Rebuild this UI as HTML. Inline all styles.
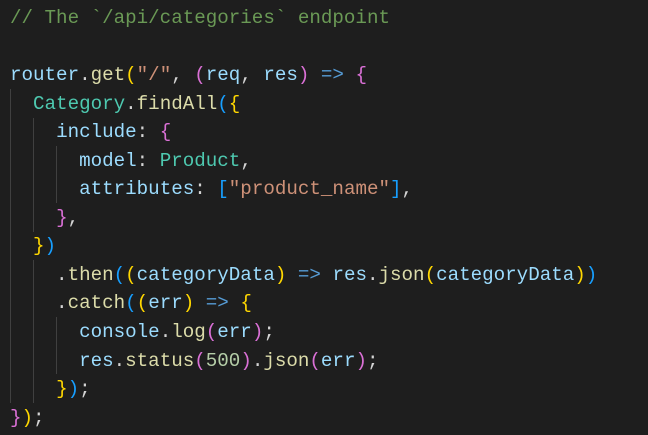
<!DOCTYPE html>
<html><head><style>
html,body{margin:0;padding:0;background:#1e1e1e;width:648px;height:435px;overflow:hidden}
pre{margin:0;position:absolute;left:10px;top:4px;font-family:"Liberation Mono",monospace;font-size:19.2px;line-height:28.55px;color:#d4d4d4}
.c{color:#6a9955}.v{color:#9cdcfe}.f{color:#dcdcaa}.t{color:#4ec9b0}.s{color:#ce9178}.n{color:#b5cea8}.k{color:#569cd6}
.y{color:#ffd700}.p{color:#da70d6}.b{color:#179fff}
.g{position:absolute;width:1px;background:#404040}
</style></head><body>
<div class="g" style="left:10px;top:89px;height:314px"></div>
<div class="g" style="left:33px;top:118px;height:114px"></div>
<div class="g" style="left:33px;top:260px;height:143px"></div>
<div class="g" style="left:56px;top:146px;height:57px"></div>
<div class="g" style="left:56px;top:317px;height:57px"></div>
<pre><span class="c">// The `/api/categories` endpoint</span>

<span class="v">router</span>.<span class="f">get</span><span class="y">(</span><span class="s">"/"</span>, <span class="p">(</span><span class="v">req</span>, <span class="v">res</span><span class="p">)</span> <span class="k">=&gt;</span> <span class="p">{</span>
  <span class="t">Category</span>.<span class="f">findAll</span><span class="b">(</span><span class="y">{</span>
    <span class="v">include</span>: <span class="p">{</span>
      <span class="v">model</span>: <span class="t">Product</span>,
      <span class="v">attributes</span>: <span class="b">[</span><span class="s">"product_name"</span><span class="b">]</span>,
    <span class="p">}</span>,
  <span class="y">}</span><span class="b">)</span>
    .<span class="f">then</span><span class="b">(</span><span class="y">(</span><span class="v">categoryData</span><span class="y">)</span> <span class="k">=&gt;</span> <span class="v">res</span>.<span class="f">json</span><span class="y">(</span><span class="v">categoryData</span><span class="y">)</span><span class="b">)</span>
    .<span class="f">catch</span><span class="b">(</span><span class="y">(</span><span class="v">err</span><span class="y">)</span> <span class="k">=&gt;</span> <span class="y">{</span>
      <span class="v">console</span>.<span class="f">log</span><span class="p">(</span><span class="v">err</span><span class="p">)</span>;
      <span class="v">res</span>.<span class="f">status</span><span class="p">(</span><span class="n">500</span><span class="p">)</span>.<span class="f">json</span><span class="p">(</span><span class="v">err</span><span class="p">)</span>;
    <span class="y">}</span><span class="b">)</span>;
<span class="p">}</span><span class="y">)</span>;</pre>
</body></html>
